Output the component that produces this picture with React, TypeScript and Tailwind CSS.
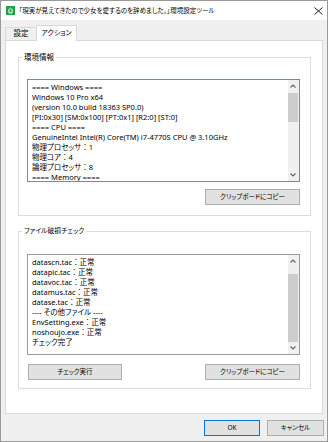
import React from "react";

const infoLines = [
  "==== Windows ====",
  "Windows 10 Pro x64",
  "(version 10.0 build 18363 SP0.0)",
  "[PI:0x30] [SM:0x100] [PT:0x1] [R2:0] [ST:0]",
  "==== CPU ====",
  "GenuineIntel Intel(R) Core(TM) i7-4770S CPU @ 3.10GHz",
  "物理プロセッサ：1",
  "物理コア：4",
  "論理プロセッサ：8",
  "==== Memory ====",
];

const checkLines = [
  "datascn.tac：正常",
  "datapic.tac：正常",
  "datavoc.tac：正常",
  "datamus.tac：正常",
  "datase.tac：正常",
  "---- その他ファイル ----",
  "EnvSetting.exe：正常",
  "noshoujo.exe：正常",
  "チェック完了",
];

function Chevron({ down }: { down?: boolean }) {
  return (
    <svg width="6" height="4" viewBox="0 0 6 4" className={down ? "rotate-180" : ""}>
      <polyline points="0.5,3.5 3,1 5.5,3.5" fill="none" stroke="#606060" strokeWidth="1.1" />
    </svg>
  );
}

function ScrollBar({ atEnd }: { atEnd?: boolean }) {
  return (
    <div className="flex w-[11px] flex-col bg-[#f0f0f0] pr-px">
      <div className="flex h-[12px] items-center justify-center">
        <Chevron />
      </div>
      <div className={`flex flex-1 flex-col ${atEnd ? "justify-end" : ""}`}>
        <div className={`bg-[#cdcdcd] ${atEnd ? "h-[68px]" : "mt-px h-[29px]"}`} />
      </div>
      <div className="flex h-[12px] items-center justify-center">
        <Chevron down />
      </div>
    </div>
  );
}

// full-width colon keeps its side bearings, as in the original edit box
function Line({ text }: { text: string }) {
  const parts = text.split("：");
  return (
    <div className="whitespace-nowrap">
      {parts[0]}
      {parts.length > 1 && (
        <>
          <span className="[font-feature-settings:normal]">：</span>
          {parts[1]}
        </>
      )}
    </div>
  );
}

function TextBox({ lines, focused, atEnd, className }: { lines: string[]; focused?: boolean; atEnd?: boolean; className: string }) {
  return (
    <div className={`flex border bg-white ${focused ? "border-[#4a95e0]" : "border-[#9a9a9a]"} ${className}`}>
      <div className="flex-1 overflow-hidden pl-[4px] pt-[2px] leading-[10px]">
        {lines.map((l) => (
          <Line key={l} text={l} />
        ))}
      </div>
      <ScrollBar atEnd={atEnd} />
    </div>
  );
}

function Btn({ children, className = "" }: { children: React.ReactNode; className?: string }) {
  return (
    <button className={`flex h-[16px] items-center justify-center border bg-[#e1e1e1] text-[6.5px] leading-none ${className}`}>
      {children}
    </button>
  );
}

export default function App() {
  return (
    <div className="flex h-[442px] w-[328px] flex-col border border-[#9a9a9a] bg-[#f0f0f0] font-['Noto_Sans','Noto_Sans_CJK_JP',sans-serif] text-[7.5px] text-black [font-feature-settings:'palt']">
      {/* title bar */}
      <div className="flex h-[19px] items-center bg-white pl-[5px] pr-[4px]">
        <svg width="9" height="9" viewBox="0 0 9 9">
          <rect width="9" height="9" fill="#21a04a" />
          <path d="M2 4.5 L4.5 2.2 L7 4.5 M3 4.2 V7 H6 V4.2" fill="none" stroke="#fff" strokeWidth="1" />
        </svg>
        <span className="ml-[4px] text-[6.5px]">「現実が見えてきたので少女を愛するのを辞めました。」環境設定ツール</span>
        <svg width="9" height="8" viewBox="0 0 9 8" className="ml-auto">
          <path d="M0.5 0.5 L8.5 7.5 M8.5 0.5 L0.5 7.5" stroke="#222" strokeWidth="1" />
        </svg>
      </div>

      {/* tabs */}
      <div className="flex h-[20px] items-end pl-[4px]">
        <div className="flex h-[13px] w-[32px] items-center justify-center border border-b-0 border-[#d9d9d9] bg-[#f0f0f0]">
          設定
        </div>
        <div className="relative z-10 -mb-px ml-[-1px] flex h-[16px] w-[41px] items-center justify-center border border-b-0 border-[#d9d9d9] bg-white pb-px text-[7px]">
          アクション
        </div>
      </div>

      {/* tab panel */}
      <div className="mx-[4px] h-[374px] border border-[#d9d9d9] bg-white pl-[12px] pr-[11px] pt-[11px]">
        <fieldset className="border border-[#dcdcdc]">
          <legend className="ml-[3px] px-[2px] leading-[10px]">環境情報</legend>
          <div className="flex flex-col pb-[10px] pl-[8px] pr-[10px] pt-[17px]">
            <TextBox lines={infoLines} focused className="h-[103px]" />
            <div className="mt-[7px] flex justify-end">
              <Btn className="w-[95px] border-[#adadad]">クリップボードにコピー</Btn>
            </div>
          </div>
        </fieldset>

        <fieldset className="mt-[10px] border border-[#dcdcdc]">
          <legend className="ml-[3px] px-[2px] text-[6.8px] leading-[10px]">ファイル破損チェック</legend>
          <div className="flex flex-col pb-[8px] pl-[8px] pr-[10px] pt-[18px]">
            <TextBox lines={checkLines} atEnd className="h-[101px]" />
            <div className="mt-[9px] flex justify-between">
              <Btn className="ml-px w-[94px] border-[#adadad]">チェック実行</Btn>
              <Btn className="w-[95px] border-[#adadad]">クリップボードにコピー</Btn>
            </div>
          </div>
        </fieldset>
      </div>

      {/* dialog buttons */}
      <div className="mt-[6px] flex justify-end gap-[7px] pr-[3px]">
        <Btn className="w-[56px] border-[#0078d7]">OK</Btn>
        <Btn className="w-[57px] border-[#adadad]">キャンセル</Btn>
      </div>
    </div>
  );
}
